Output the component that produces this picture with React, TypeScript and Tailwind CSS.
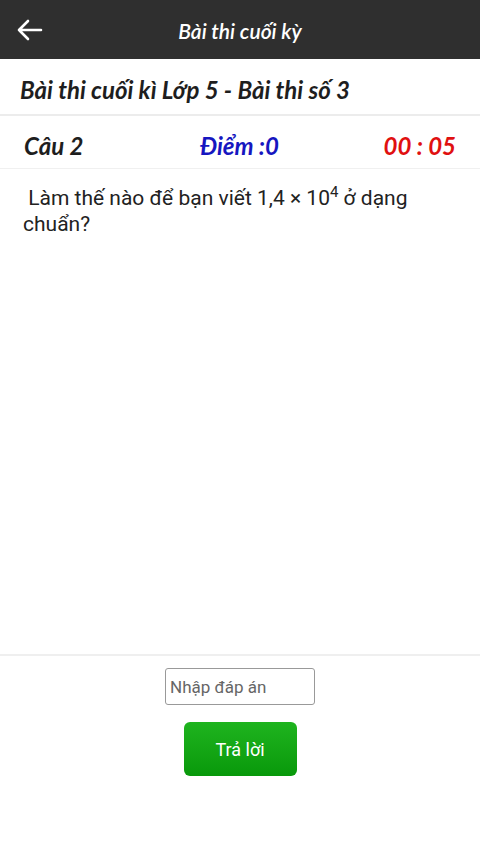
import React from "react";

const italicFont = "[font-family:Lato,'Noto_Sans',sans-serif]";

export default function App() {
  return (
    <div className="flex flex-col w-[480px] h-[853px] bg-white [font-family:Roboto,'Noto_Sans',sans-serif]">
      <header className="relative flex items-center justify-center h-[59px] bg-[#2f2f2f]">
        <button className="absolute left-[15px] top-[18px] text-white">
          <svg width="28" height="24" viewBox="0 0 28 24" fill="none">
            <path
              d="M26 12H4M13 3L4 12L13 21"
              stroke="white"
              strokeWidth="2.6"
              strokeLinecap="round"
              strokeLinejoin="round"
            />
          </svg>
        </button>
        <h1 className={`${italicFont} italic font-semibold text-[21px] text-white pt-[3px]`}>
          Bài thi cuối kỳ
        </h1>
      </header>

      <div className="flex items-center h-[57px] px-[20px] pt-[6px] border-b-2 border-[#ececec]">
        <h2 className={`${italicFont} italic font-bold text-[24px] text-[#1e1e1e]`}>
          Bài thi cuối kì Lớp 5 - Bài thi số 3
        </h2>
      </div>

      <div className="flex items-center h-[53px] pl-[24px] pr-[24px] pt-[8px] border-b border-[#f0f0f0]">
        <span className={`${italicFont} italic font-bold text-[24px] text-[#1e1e1e] w-[176px]`}>Câu 2</span>
        <span className={`${italicFont} italic font-bold text-[24px] text-[#1616c0]`}>Điểm :0</span>
        <span className={`${italicFont} italic font-bold text-[24px] text-[#e01010] ml-auto`}>00 : 05</span>
      </div>

      <div className="flex-1 min-h-0 pl-[23px] pr-[20px] pt-[16px]">
        <p className="text-[21px] leading-[26px] text-[#222]">
          &nbsp;Làm thế nào để bạn viết 1,4 × 10
          <sup className="text-[15px] leading-none -top-[0.55em]">4</sup> ở dạng chuẩn?
        </p>
      </div>

      <div className="flex flex-col items-center h-[199px] pt-[12px] border-t-2 border-[#efefef]">
        <input
          type="text"
          placeholder="Nhập đáp án"
          className="w-[150px] h-[37px] px-[4px] border border-[#999] rounded-[3px] text-[17px] text-[#333] placeholder:text-[#666] outline-none"
        />
        <button className="mt-[17px] w-[113px] h-[54px] rounded-[6px] bg-gradient-to-b from-[#1eb41e] to-[#08990a] text-white text-[18px]">
          Trả lời
        </button>
      </div>
    </div>
  );
}
